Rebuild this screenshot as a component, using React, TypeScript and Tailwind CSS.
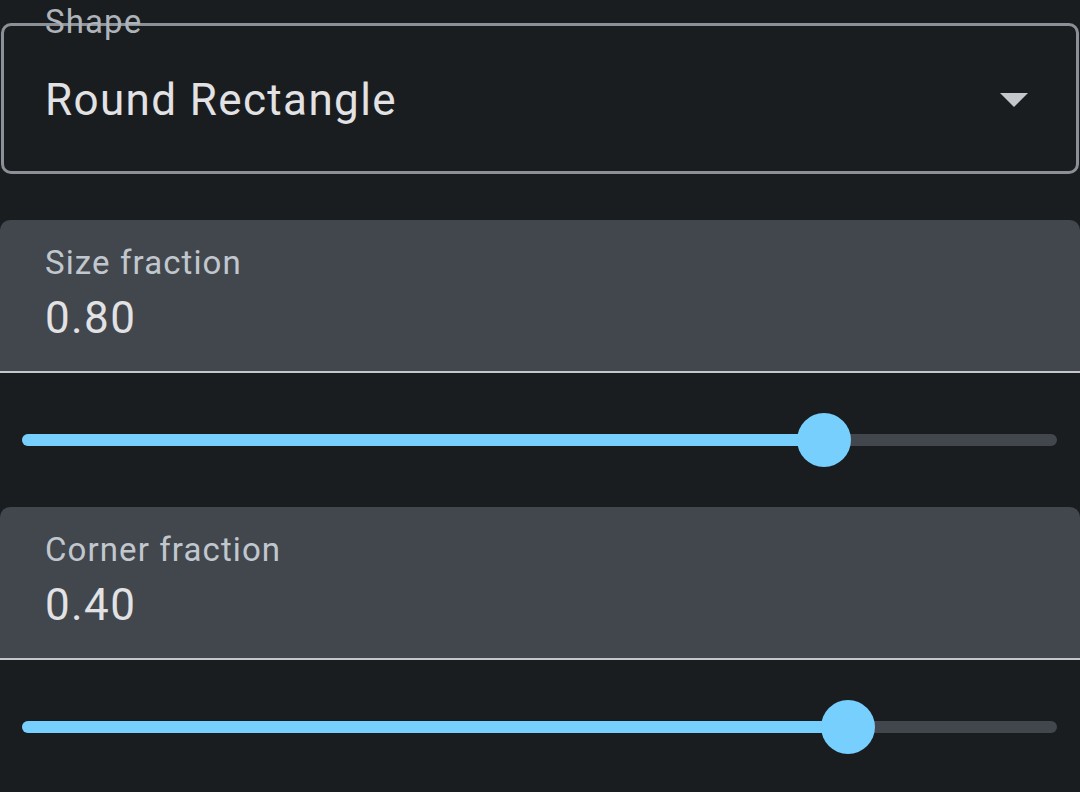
import React from "react";

const font = { fontFamily: "Roboto, 'Noto Sans', sans-serif" };

const FilledField = ({ label, value }: { label: string; value: string }) => (
  <div className="h-[153px] bg-[#41474d] rounded-t-[10px] border-b-2 border-[#c4c8cc] pl-[45px] pt-[26px]">
    <div className="text-[33px] leading-none text-[#c1c7ce] tracking-[1.1px]">{label}</div>
    <div className="mt-[17px] text-[44px] leading-none text-[#e2e2e5] tracking-[1.375px]">{value}</div>
  </div>
);

const Slider = ({ pct }: { pct: number }) => (
  <div className="h-[134px] flex items-center pl-[22px] pr-[23px]">
    <div className="relative w-full h-[12px] rounded-full bg-[#41474d]">
      <div className="absolute left-0 top-0 h-full rounded-full bg-[#76cffd]" style={{ width: `${pct}%` }} />
      <div
        className="absolute top-1/2 w-[54px] h-[54px] -translate-x-1/2 -translate-y-1/2 rounded-full bg-[#76cffd]"
        style={{ left: `${pct}%` }}
      />
    </div>
  </div>
);

export default function App() {
  return (
    <div className="w-[1080px] h-[792px] overflow-hidden bg-[#1a1d20]" style={font}>
      <div className="pt-[23px] px-[1px]">
        <div className="relative h-[151px] border-[3px] border-[#8b9197] rounded-[10px] flex items-center pl-[41px] pr-[48px]">
          <span className="absolute left-[41px] top-[-21px] text-[33px] leading-none text-[#adb3b9] tracking-[1.1px]">
            Shape
          </span>
          <span className="flex-1 mt-[2px] text-[44px] leading-none text-[#e2e2e5] tracking-[1.375px]">
            Round Rectangle
          </span>
          <svg width="28" height="14" viewBox="0 0 28 14" className="mt-[2px]">
            <polygon points="0,0 28,0 14,14" fill="#c4c7cc" />
          </svg>
        </div>
      </div>
      <div className="mt-[46px]">
        <FilledField label="Size fraction" value="0.80" />
        <Slider pct={77.5} />
        <FilledField label="Corner fraction" value="0.40" />
        <Slider pct={79.8} />
      </div>
    </div>
  );
}
